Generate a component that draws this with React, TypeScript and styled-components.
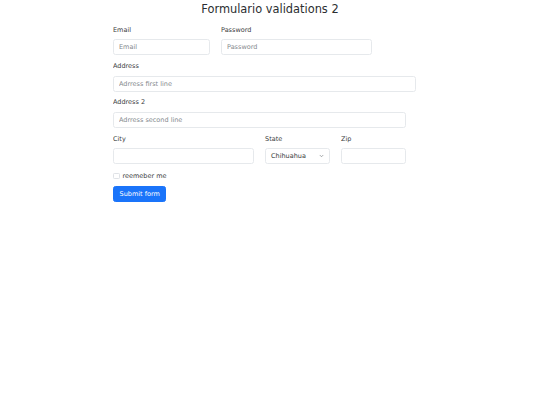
import styled, { createGlobalStyle } from "styled-components";

const Global = createGlobalStyle`
  html, body {
    margin: 0;
    padding: 0;
    background: #fff;
  }
  body {
    font-family: "DejaVu Sans", "Liberation Sans", sans-serif;
    color: #212529;
  }
  * {
    box-sizing: border-box;
  }
`;

const Page = styled.div`
  width: 540px;
  min-height: 405px;
  padding-top: 1.5px;
  opacity: 0.999;
`;

const Title = styled.h3`
  margin: 0 0 10px;
  text-align: center;
  font-size: 11.4px;
  font-weight: 400;
  line-height: 14px;
  color: #2b2e31;
`;

const Form = styled.form`
  width: 314px;
  margin: 0 auto;
  display: flex;
  flex-direction: column;
`;

const Row = styled.div`
  display: flex;
  gap: 11px;
  margin-bottom: 6.6px;
`;

const Field = styled.div<{ $w: number }>`
  width: ${(p) => p.$w}px;
  display: flex;
  flex-direction: column;
`;

const Label = styled.label`
  font-size: 6.5px;
  line-height: 9.75px;
  margin-bottom: 4px;
  color: #3a3d40;
`;

const Input = styled.input`
  width: 100%;
  height: 16px;
  padding: 0 5px;
  font-family: inherit;
  font-size: 6.5px;
  color: #3a3d40;
  background: #fff;
  border: 0.6px solid #e6e9ec;
  border-radius: 2.5px;
  outline: none;

  &::placeholder {
    color: #85898d;
  }
`;

const SelectBox = styled.div`
  width: 100%;
  height: 16px;
  padding: 0 5px;
  display: flex;
  align-items: center;
  justify-content: space-between;
  font-size: 6.5px;
  color: #3a3d40;
  border: 0.6px solid #e6e9ec;
  border-radius: 2.5px;
  background: #fff;
`;

const Check = styled.div`
  display: flex;
  align-items: center;
  gap: 3px;
  height: 9.75px;
  margin-bottom: 5.3px;
  font-size: 6.5px;
  color: #3a3d40;
`;

const Box = styled.span`
  width: 6.5px;
  height: 6.5px;
  border: 0.6px solid #dfe2e6;
  border-radius: 1.3px;
  background: #fff;
`;

const Button = styled.button`
  align-self: flex-start;
  height: 16.5px;
  padding: 0 5.6px;
  font-family: inherit;
  font-size: 6.5px;
  color: #fff;
  background: #1a74fa;
  border: 0.6px solid #1a74fa;
  border-radius: 2.5px;
`;

const Chevron = () => (
  <svg width="5" height="4" viewBox="0 0 16 16">
    <path d="M2 5l6 6 6-6" fill="none" stroke="#555a5f" strokeWidth="2" strokeLinecap="round" strokeLinejoin="round" />
  </svg>
);

export default function App() {
  return (
    <Page>
      <Global />
      <Title>Formulario validations 2</Title>
      <Form onSubmit={(e) => e.preventDefault()}>
        <Row>
          <Field $w={97}>
            <Label>Email</Label>
            <Input placeholder="Email" />
          </Field>
          <Field $w={151}>
            <Label>Password</Label>
            <Input placeholder="Password" type="password" />
          </Field>
        </Row>
        <Row>
          <Field $w={303}>
            <Label>Address</Label>
            <Input placeholder="Adrress first line" />
          </Field>
        </Row>
        <Row>
          <Field $w={293}>
            <Label>Address 2</Label>
            <Input placeholder="Adrress second line" />
          </Field>
        </Row>
        <Row>
          <Field $w={141}>
            <Label>City</Label>
            <Input />
          </Field>
          <Field $w={65}>
            <Label>State</Label>
            <SelectBox>
              <span>Chihuahua</span>
              <Chevron />
            </SelectBox>
          </Field>
          <Field $w={65}>
            <Label>Zip</Label>
            <Input />
          </Field>
        </Row>
        <Check>
          <Box />
          <span>reemeber me</span>
        </Check>
        <Button type="submit">Submit form</Button>
      </Form>
    </Page>
  );
}
